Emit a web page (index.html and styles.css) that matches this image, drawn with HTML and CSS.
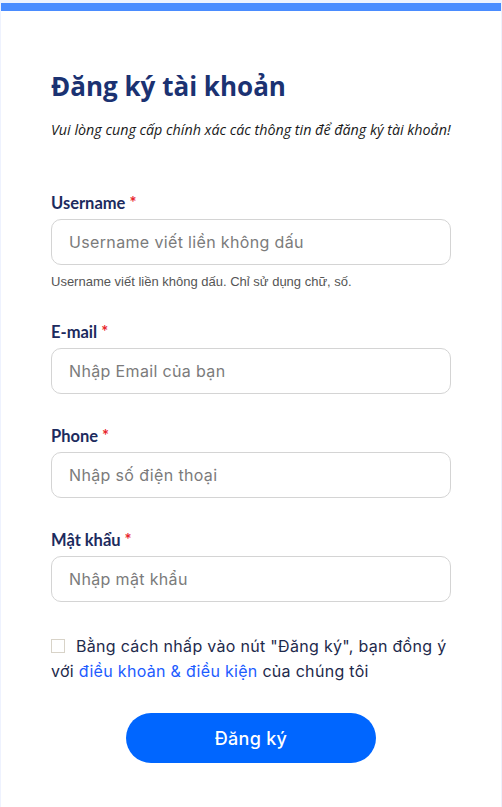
FILE: index.html
```html
<!DOCTYPE html>
<html lang="vi">
<head>
<meta charset="utf-8">
<title>Đăng ký tài khoản</title>
<link rel="stylesheet" href="styles.css">
</head>
<body>
<main class="card">
  <h1 class="title">Đăng ký tài khoản</h1>
  <p class="subtitle">Vui lòng cung cấp chính xác các thông tin để đăng ký tài khoản!</p>

  <form class="form">
    <div class="field">
      <label class="label">Username <span class="req">*</span></label>
      <input class="input" type="text" placeholder="Username viết liền không dấu">
      <p class="hint">Username viết liền không dấu. Chỉ sử dụng chữ, số.</p>
    </div>
    <div class="field">
      <label class="label">E-mail <span class="req">*</span></label>
      <input class="input" type="text" placeholder="Nhập Email của bạn">
    </div>
    <div class="field">
      <label class="label">Phone <span class="req">*</span></label>
      <input class="input" type="text" placeholder="Nhập số điện thoại">
    </div>
    <div class="field">
      <label class="label">Mật khẩu <span class="req">*</span></label>
      <input class="input" type="password" placeholder="Nhập mật khẩu">
    </div>

    <p class="agree"><span class="line1"><span class="box"></span>Bằng cách nhấp vào nút "Đăng ký", bạn đồng ý</span><br>với <a class="link" href="#">điều khoản &amp; điều kiện</a> của chúng tôi</p>

    <div class="actions">
      <button class="btn" type="button">Đăng ký</button>
    </div>
  </form>
</main>
</body>
</html>
```
FILE: styles.css
```css
html, body {
  margin: 0;
  padding: 0;
}
body {
  background: #eef2fe;
  min-height: 807px;
  padding: 3px 1px 0 1px;
  box-sizing: border-box;
}
.card {
  background: #ffffff;
  border-top: 8px solid #4a8cff;
  padding: 57px 50px 40px 50px;
  min-height: 820px;
  box-sizing: border-box;
}
.title {
  margin: 0;
  font-family: "Open Sans", sans-serif;
  font-weight: 700;
  font-size: 26px;
  line-height: 36px;
  color: #1b3272;
}
.subtitle {
  margin: 16px 0 0 0;
  font-family: "Open Sans", sans-serif;
  font-style: italic;
  font-size: 14.3px;
  line-height: 20px;
  color: #1a1a1a;
}
.form {
  margin-top: 51px;
}
.field {
  margin-bottom: 30px;
}
.label {
  display: block;
  font-family: Lato, sans-serif;
  font-weight: 700;
  font-size: 16.5px;
  line-height: 24px;
  color: #1c2b5e;
  margin-bottom: 4px;
}
.req {
  color: #e8242b;
}
.input {
  display: block;
  width: 100%;
  height: 46px;
  box-sizing: border-box;
  border: 1px solid #d4d4d4;
  border-radius: 10px;
  padding: 0 17px;
  font-family: Inter, sans-serif;
  font-size: 16px;
  letter-spacing: 0.35px;
  color: #333;
  background: #fff;
  outline: none;
}
.input::placeholder {
  color: #7b7b7b;
}
.hint {
  margin: 9px 0 0 0;
  font-family: "Liberation Sans", Arial, sans-serif;
  font-size: 13px;
  line-height: 16px;
  color: #555555;
}
.agree {
  margin: 0;
  padding-top: 2px;
  font-family: Inter, sans-serif;
  font-size: 16px;
  letter-spacing: 0.3px;
  line-height: 25px;
  color: #1e2a4c;
}
.line1 {
  white-space: nowrap;
}
.box {
  display: inline-block;
  width: 14px;
  height: 14px;
  box-sizing: border-box;
  border: 1px solid #d8d3c8;
  margin-right: 11px;
  vertical-align: -1px;
}
.link {
  color: #1d5cff;
  text-decoration: none;
}
.actions {
  display: flex;
  justify-content: center;
  margin-top: 29px;
}
.btn {
  width: 250px;
  height: 50px;
  border: none;
  border-radius: 25px;
  background: #0066ff;
  color: #ffffff;
  font-family: Inter, sans-serif;
  font-weight: 500;
  font-size: 18px;
  letter-spacing: 0.3px;
  cursor: pointer;
}
```
